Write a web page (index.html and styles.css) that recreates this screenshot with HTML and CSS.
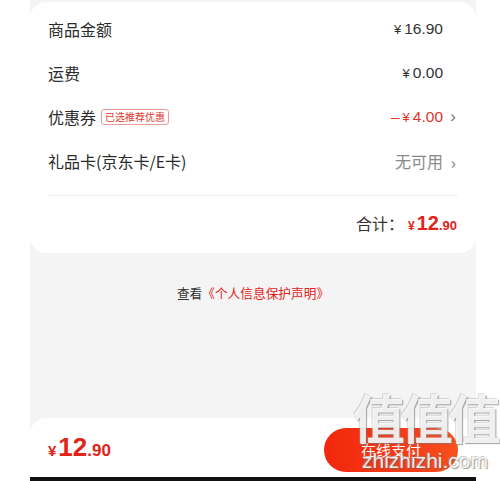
FILE: index.html
```html
<!DOCTYPE html>
<html lang="zh-CN">
<head>
<meta charset="utf-8">
<link rel="stylesheet" href="styles.css">
</head>
<body>
<div class="phone">
  <div class="card">
    <div class="row"><span class="label">商品金额</span><span class="value pad"><span class="y">¥</span>16.90</span></div>
    <div class="row"><span class="label">运费</span><span class="value pad"><span class="y">¥</span>0.00</span></div>
    <div class="row"><span class="label">优惠券<span class="badge">已选推荐优惠</span></span><span class="value red"><span class="minus">–</span><span class="y">¥</span>4.00<span class="arrow">›</span></span></div>
    <div class="row"><span class="label">礼品卡(京东卡/E卡)</span><span class="value gray">无可用<span class="arrow">›</span></span></div>
    <div class="sep"></div>
    <div class="total"><span class="total-label">合计：</span><span class="price"><span class="yen">¥</span><span class="big">12</span><span class="dec">.90</span></span></div>
  </div>
  <div class="notice">查看<span class="link">《个人信息保护声明》</span></div>
  <div class="spacer"></div>
  <div class="bottom">
    <div class="price bottom-price"><span class="yen">¥</span><span class="big">12</span><span class="dec">.90</span></div>
    <div class="pay">在线支付</div>
  </div>
  <div class="homebar"></div>
</div>
<div class="watermark"><div class="wm-big">值值值</div><div class="wm-small">zhizhizhi.com</div></div>
</body>
</html>
```
FILE: styles.css
```css
html, body { margin: 0; padding: 0; }
body {
  background: #fff;
  width: 500px;
  height: 481px;
  overflow: hidden;
  font-family: "Liberation Sans", "Noto Sans CJK SC", sans-serif;
  position: relative;
}
.phone {
  margin-left: 30px;
  width: 446px;
  height: 481px;
  background: #f4f4f4;
  display: flex;
  flex-direction: column;
  padding-top: 2px;
  box-sizing: border-box;
}
.card {
  background: #fff;
  border-radius: 16px;
  padding: 5px 18px 0 18px;
  height: 251px;
  box-sizing: border-box;
}
.row {
  height: 44px;
  display: flex;
  align-items: center;
  justify-content: space-between;
}
.label {
  font-family: "Noto Sans CJK SC", sans-serif;
  font-size: 16px;
  color: #2a2a2a;
  display: flex;
  align-items: center;
}
.badge {
  margin-left: 5px;
  border: 1px solid #ec9b97;
  border-radius: 3px;
  color: #e2372b;
  font-size: 10px;
  line-height: 14px;
  padding: 0 3px;
}
.value {
  font-size: 15.5px;
  color: #333;
  display: flex;
  align-items: center;
}
.value .y { font-size: 13px; margin-right: 3px; }
.value .minus { margin-right: 3px; }
.value.pad { padding-right: 15px; }
.value.red { color: #e3342a; }
.value.gray { color: #8a8a8a; font-family: "Noto Sans CJK SC", sans-serif; font-size: 16px; }
.arrow {
  color: #777;
  font-size: 17px;
  width: 15px;
  text-align: right;
  padding-right: 2px;
  box-sizing: border-box;
}
.sep {
  margin-top: 12px;
  height: 1px;
  background: #f0f0f0;
}
.total {
  height: 54px;
  display: flex;
  align-items: center;
  justify-content: flex-end;
  padding-right: 1px;
}
.total-label {
  font-family: "Noto Sans CJK SC", sans-serif;
  font-size: 16px;
  color: #333;
  margin-right: 4px;
}
.price {
  color: #e2231a;
  font-family: "Liberation Sans", sans-serif;
  display: flex;
  align-items: baseline;
}
.price .yen { font-size: 12px; font-weight: bold; margin-right: 2px; }
.price .big { font-size: 20px; font-weight: bold; }
.price .dec { font-size: 13px; font-weight: bold; }
.notice {
  margin-top: 30px;
  text-align: center;
  font-family: "Noto Sans CJK SC", sans-serif;
  font-size: 12.7px;
  color: #333;
}
.link { color: #e2231a; }
.spacer { flex: 1; }
.bottom {
  height: 59px;
  background: #fff;
  border-radius: 16px 16px 0 0;
  display: flex;
  align-items: center;
  justify-content: space-between;
  padding: 0 18px;
}
.bottom-price .yen { font-size: 15px; }
.bottom-price .big { font-size: 26px; }
.bottom-price .dec { font-size: 17px; }
.pay {
  width: 134px;
  height: 44px;
  border-radius: 22px;
  background: linear-gradient(90deg, #f2270c, #f6401a 70%, #f8501c);
  color: #fff;
  font-family: "Noto Sans CJK SC", sans-serif;
  font-size: 15px;
  display: flex;
  align-items: center;
  justify-content: center;
  margin-top: 4px;
}
.homebar {
  height: 4px;
  background: #111;
}
.watermark {
  position: absolute;
  left: 350px;
  top: 386px;
  width: 150px;
  text-align: center;
  pointer-events: none;
}
.wm-big {
  font-family: "Noto Sans CJK SC", sans-serif;
  font-size: 52px;
  line-height: 62px;
  font-weight: bold;
  color: rgba(255,255,255,0.85);
  text-shadow: 1px 1px 1px rgba(120,120,120,0.7), -1px -1px 0 rgba(160,160,160,0.4);
  letter-spacing: -4px;
}
.wm-small {
  font-family: "Liberation Sans", sans-serif;
  font-size: 21px;
  line-height: 22px;
  color: rgba(255,255,255,0.9);
  text-shadow: 1px 1px 1px rgba(100,100,100,0.7), -1px -1px 0 rgba(150,150,150,0.5);
  margin-top: 2px;
}
```
